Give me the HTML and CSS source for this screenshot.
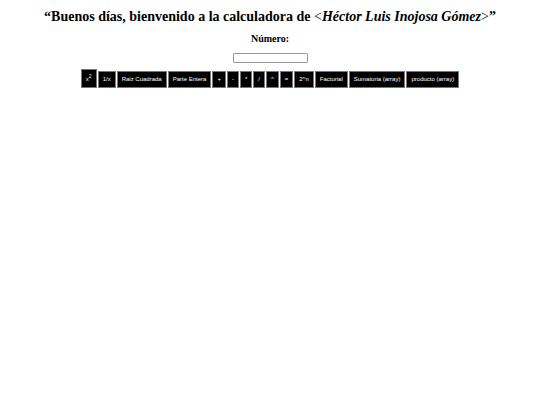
FILE: index.html
```html
<!DOCTYPE html>
<html lang="es">
<head>
    <meta charset="UTF-8">
    <title>Calculadora</title>
    <link rel="stylesheet" href="styles.css">
</head>
<body>

    <h1>“Buenos días, bienvenido a la calculadora de <span class="signo">&lt;</span><em>Héctor Luis Inojosa Gómez</em><span class="signo">&gt;</span>”</h1>

    <h2><label for="numero">Número:</label></h2>
    <input type="text" id="numero" class="numero">

    <!--OPERACIONES-->
    <div class="botones">
        <button type="button" class="boton">x<sup>2</sup></button>
        <button type="button" class="boton">1/x</button>
        <button type="button" class="boton">Raiz Cuadrada</button>
        <button type="button" class="boton">Parte Entera</button>
        <button type="button" class="boton">+</button>
        <button type="button" class="boton">-</button>
        <button type="button" class="boton">*</button>
        <button type="button" class="boton">/</button>
        <button type="button" class="boton">^</button>
        <button type="button" class="boton">=</button>
        <button type="button" class="boton">2^n</button>
        <button type="button" class="boton">Factorial</button>
        <button type="button" class="boton">Sumatoria (array)</button>
        <button type="button" class="boton">producto (array)</button>
    </div>

</body>
</html>
```

FILE: styles.css
```css
body {
    margin: 8px;
    background-color: white;
    color: black;
    font-family: "Liberation Serif", "Times New Roman", serif;
    text-align: center;
}
h1 {
    margin: 0 0 7px;
    font-size: 14px;
    line-height: 18px;
}
.signo {
    font-weight: normal;
}
h2 {
    margin: 0 0 8px;
    font-size: 10px;
    line-height: 12px;
}
.numero {
    display: block;
    box-sizing: border-box;
    width: 75px;
    height: 10px;
    margin: 0 auto 6px;
    padding: 0 2px;
    border: 1px solid #999;
    border-radius: 1px;
    font-size: 6px;
}
.botones {
    display: flex;
    flex-wrap: wrap;
    justify-content: center;
    align-items: flex-end;
    gap: 1px;
}
.boton {
    padding: 4px;
    border: 1px solid #777;
    background-color: black;
    color: white;
    font-family: "Liberation Sans", Arial, sans-serif;
    font-size: 6px;
    line-height: 7px;
}
.boton sup {
    font-size: 5px;
    line-height: 4px;
}
```
